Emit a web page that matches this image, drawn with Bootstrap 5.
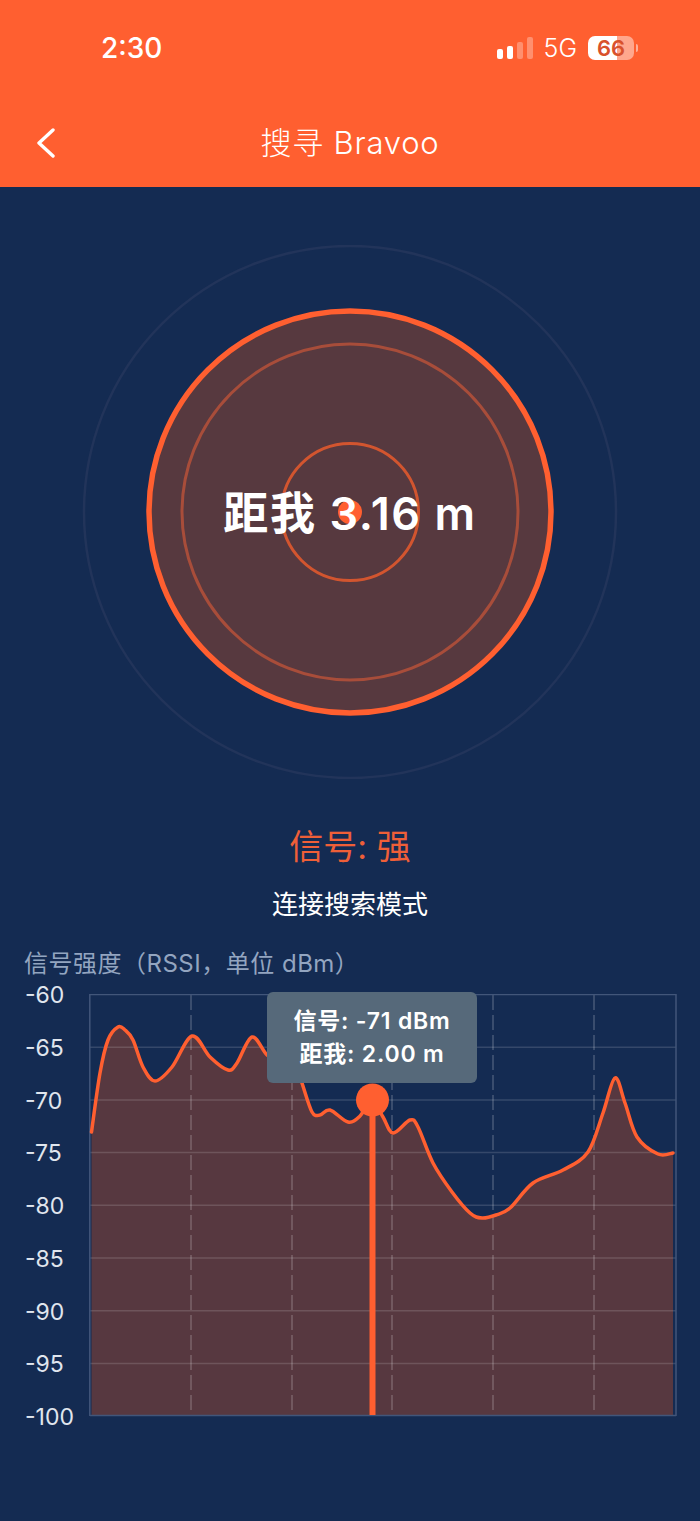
<!DOCTYPE html>
<html lang="zh">
<head>
  <meta charset="UTF-8" />
  <meta name="viewport" content="width=device-width, initial-scale=1.0" />
  <title>搜寻 Bravoo</title>
  <link href="https://cdn.jsdelivr.net/npm/bootstrap@5.3.3/dist/css/bootstrap.min.css" rel="stylesheet">
  <style>
    html, body {
      margin: 0;
      height: 100%;
      background: #142b52;
      font-family: Inter, "Noto Sans CJK SC", sans-serif;
      overflow: hidden;
    }

    .app-head { background: #ff5f30; height: 187px; color: #fff; }

    .status-row { height: 96px; padding: 0 62px 0 101px; }
    .clock { font-size: 28px; font-weight: 500; line-height: 1; }
    .net-label { font-size: 25px; font-weight: 300; line-height: 1; margin: 0 11px 0 11px; }

    .sig-bars { height: 22px; gap: 4px; }
    .sig-bars span { width: 6px; background: #fff; border-radius: 2px; }
    .sig-bars .b1 { height: 10px; }
    .sig-bars .b2 { height: 13px; }
    .sig-bars .b3 { height: 17px; opacity: .3; }
    .sig-bars .b4 { height: 22px; opacity: .3; }

    .batt {
      width: 46px;
      height: 24px;
      border-radius: 7px;
      background: linear-gradient(90deg, #fff 63%, rgba(255,255,255,.45) 63%);
      color: #d9512c;
      font-size: 22px;
      font-weight: 600;
      line-height: 24px;
      text-align: center;
    }
    .batt-tip { width: 2px; height: 8px; background: rgba(255,255,255,.5); border-radius: 0 2px 2px 0; margin-left: 2px; }

    .title-row { height: 91px; padding-top: 3px; }
    .back-btn { left: 36px; top: 32px; }
    .page-title { font-size: 31px; font-weight: 300; letter-spacing: .8px; }

    .radar { height: 534px; margin-top: 58px; }
    .radar-text {
      top: 50%;
      left: 0;
      right: 0;
      margin-top: 1px;
      transform: translateY(-50%);
      color: #fff;
      font-size: 45px;
      font-weight: 600;
      letter-spacing: 1.6px;
      line-height: 1;
    }

    .signal-state { color: #ef5f38; font-size: 34px; line-height: 40px; margin-top: 48px; }
    .mode-text { color: #fff; font-size: 26px; line-height: 36px; margin-top: 20px; }
    .chart-title { color: #93a5c0; font-size: 24px; letter-spacing: .5px; line-height: 32px; padding-left: 24px; margin-top: 25px; }

    .axis-y { width: 89px; padding-left: 25px; margin-top: -11px; color: #e0e6ee; font-size: 23px; font-weight: 400; }
    .axis-y div { height: 52.75px; line-height: 52.75px; }
    .plot { width: 588px; height: 423px; margin-top: 14px; }
    .plot svg { display: block; }

    .plot-tip {
      left: 178px;
      top: -2px;
      width: 210px;
      height: 91px;
      background: #56697a;
      border-radius: 6px;
      color: #fff;
      font-size: 23px;
      font-weight: 600;
      letter-spacing: .8px;
      line-height: 33px;
      padding-top: 13px;
      text-align: center;
    }
  </style>
</head>
<body>

  <!-- Cabecera -->
  <header class="app-head">
    <div class="status-row d-flex align-items-center justify-content-between">
      <span class="clock">2:30</span>
      <div class="d-flex align-items-center">
        <div class="sig-bars d-flex align-items-end">
          <span class="b1"></span><span class="b2"></span><span class="b3"></span><span class="b4"></span>
        </div>
        <span class="net-label">5G</span>
        <div class="batt">66</div>
        <div class="batt-tip"></div>
      </div>
    </div>
    <div class="title-row position-relative d-flex align-items-center justify-content-center">
      <svg class="back-btn position-absolute" width="20" height="30" viewBox="0 0 20 30" fill="none" stroke="#fff" stroke-width="3.4" stroke-linecap="round" stroke-linejoin="round">
        <path d="M17 2 3 15l14 13"/>
      </svg>
      <span class="page-title">搜寻 Bravoo</span>
    </div>
  </header>

  <!-- Radar -->
  <section class="radar position-relative d-flex justify-content-center">
    <svg width="536" height="534" viewBox="-268 -267 536 534">
      <circle r="266" fill="none" stroke="#22345a" stroke-width="2.5"/>
      <circle r="201" fill="#57393f" stroke="#ff5f30" stroke-width="5.5"/>
      <circle r="168" fill="none" stroke="#a84d3a" stroke-width="3"/>
      <circle r="68.5" fill="none" stroke="#d2552f" stroke-width="3"/>
      <circle r="12" fill="#ff5f30"/>
    </svg>
    <div class="radar-text position-absolute text-center">距我 3.16 m</div>
  </section>

  <div class="signal-state text-center">信号: 强</div>
  <div class="mode-text text-center">连接搜索模式</div>
  <div class="chart-title">信号强度（RSSI，单位 dBm）</div>

  <!-- Grafica -->
  <section class="d-flex">
    <div class="axis-y flex-shrink-0">
      <div>-60</div><div>-65</div><div>-70</div><div>-75</div><div>-80</div><div>-85</div><div>-90</div><div>-95</div><div>-100</div>
    </div>
    <div class="plot position-relative flex-shrink-0">
      <svg id="plot-svg" width="588" height="423" viewBox="89 994 588 423">
        <path id="curve-fill" fill="#ff5a14" fill-opacity=".285"/>
        <g id="grid"></g>
        <path id="curve-line" fill="none" stroke="#ff5f30" stroke-width="3.5" stroke-linecap="round"/>
        <rect x="369.5" y="1100" width="6" height="315" fill="#ff5f30"/>
        <circle cx="372.5" cy="1100" r="16.5" fill="#ff5f30"/>
      </svg>
      <div class="plot-tip position-absolute">信号: -71 dBm<br>距我: 2.00 m</div>
    </div>
  </section>

  <script>
    const NS = 'http://www.w3.org/2000/svg';
    const pts = [[91.5,1132],[100,1073],[108,1040],[118,1027],[125,1030],[133,1040],[143,1067],[155,1081],[172,1067],[192,1036],[210,1057],[228,1070],[237,1063],[252,1037],[267,1055],[280,1062],[294,1058],[302,1083],[312,1112],[320,1115],[330,1110],[348,1122],[360,1116],[372,1100],[383,1117],[393,1133],[410,1120],[418,1127],[433,1163],[452,1192],[470,1213],[482,1218],[496,1215],[510,1208],[533,1183],[563,1170],[588,1152],[603,1113],[615,1078],[625,1103],[637,1137],[658,1154],[673,1153]];

    // curva suavizada (catmull-rom a bezier)
    let d = `M${pts[0][0]} ${pts[0][1]}`;
    for (let i = 0; i < pts.length - 1; i++) {
      const p0 = pts[i - 1] || pts[i], p1 = pts[i], p2 = pts[i + 1], p3 = pts[i + 2] || p2;
      const c1 = [p1[0] + (p2[0] - p0[0]) / 6, p1[1] + (p2[1] - p0[1]) / 6];
      const c2 = [p2[0] - (p3[0] - p1[0]) / 6, p2[1] - (p3[1] - p1[1]) / 6];
      d += `C${c1[0]} ${c1[1]} ${c2[0]} ${c2[1]} ${p2[0]} ${p2[1]}`;
    }
    document.getElementById('curve-line').setAttribute('d', d);
    document.getElementById('curve-fill').setAttribute('d', d + 'L673 1415L91.5 1415Z');

    const grid = document.getElementById('grid');
    function line(x1, y1, x2, y2, stroke, dash) {
      const l = document.createElementNS(NS, 'line');
      l.setAttribute('x1', x1); l.setAttribute('y1', y1);
      l.setAttribute('x2', x2); l.setAttribute('y2', y2);
      l.setAttribute('stroke', stroke);
      l.setAttribute('stroke-width', 1.5);
      if (dash) l.setAttribute('stroke-dasharray', dash);
      grid.appendChild(l);
    }
    for (let i = 1; i < 8; i++) {
      const y = 994.5 + i * 52.7;
      line(90, y, 676, y, 'rgba(255,255,255,.14)');
    }
    [191, 292, 392, 493, 594].forEach(x => line(x, 995, x, 1415, 'rgba(255,255,255,.22)', '15 5'));
    line(90, 994.5, 676, 994.5, '#42567a');
    line(90, 1415.5, 676, 1415.5, '#42567a');
    line(89.8, 994, 89.8, 1416, '#42567a');
    line(676, 994, 676, 1416, '#42567a');
  </script>

  <script src="https://cdn.jsdelivr.net/npm/bootstrap@5.3.3/dist/js/bootstrap.bundle.min.js"></script>
</body>
</html>
